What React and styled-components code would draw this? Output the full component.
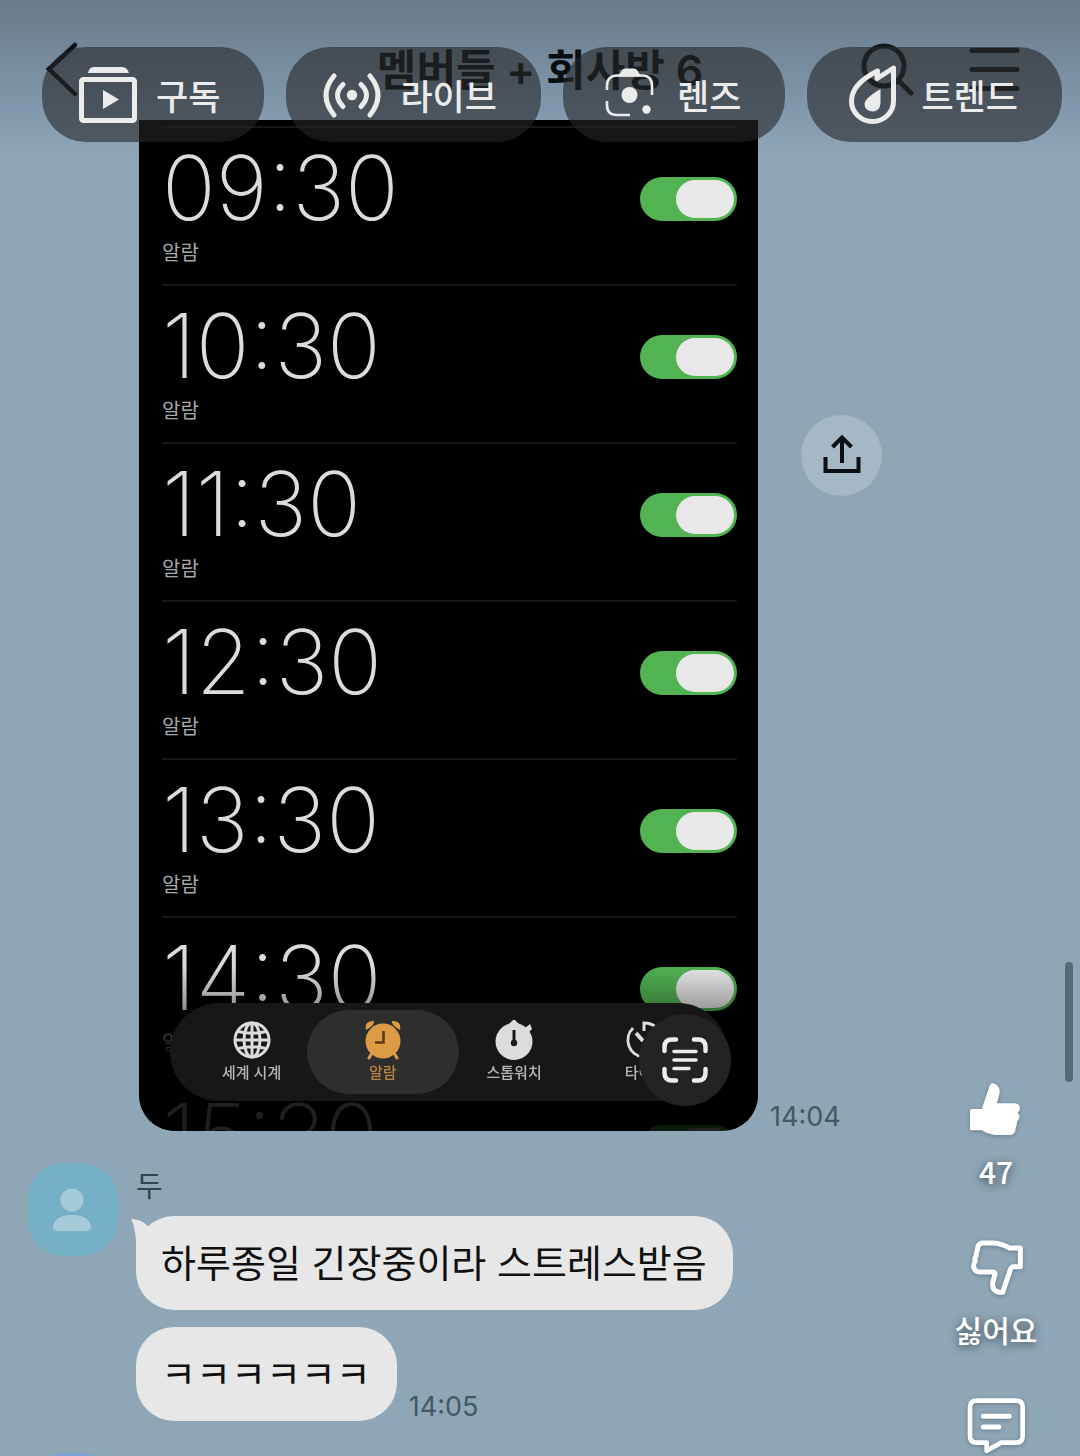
import React, { useState } from 'react';
import styled, { createGlobalStyle } from 'styled-components'

const GlobalStyle = createGlobalStyle`
*{
    box-sizing: border-box;
}
body{
    margin: 0;
    background: #8fa6b6;
    font-family: Inter, "Noto Sans CJK KR", sans-serif;
}
button{
    font: inherit;
    color: inherit;
    padding: 0;
    border: 0;
    background: none;
    cursor: pointer;
}
svg{
    display: block;
}
`

const alarms = ['09:30', '10:30', '11:30', '12:30', '13:30', '14:30', '15:30']

const SubscribeIcon = () => (
    <svg width="58" height="58" viewBox="0 0 58 58" fill="currentColor">
        <path d="M9 7 Q10 1 15 1 H43 Q48 1 50 7 Z" />
        <rect x="2.5" y="13.5" width="53" height="41" rx="2" fill="none" stroke="currentColor" strokeWidth="5" />
        <path d="M24 24 L40 33.5 L24 43 Z" />
    </svg>
)

const LiveIcon = () => (
    <svg width="58" height="58" viewBox="0 0 58 58" fill="none" stroke="currentColor" strokeWidth="5" strokeLinecap="round">
        <circle cx="29" cy="29" r="5.2" fill="currentColor" stroke="none" />
        <path d="M20 18.5 Q9 29 20 40.5 M38 18.5 Q49 29 38 40.5" />
        <path d="M11 10 Q-5 29 11 49 M47 10 Q63 29 47 49" />
    </svg>
)

const LensIcon = () => (
    <svg width="58" height="58" viewBox="0 0 58 58" fill="none" stroke="currentColor" strokeWidth="2.6">
        <path d="M7 24 V20 Q7 9.5 17.5 9.5 H42 Q52 9.5 52 20 V29" />
        <path d="M7 35 V39 Q7 49 17 49 H30" />
        <path d="M18 10.5 L22 4 Q23 2.5 25 2.5 H34 Q36 2.5 37 4 L41 10.5 Z" fill="currentColor" stroke="none" />
        <circle cx="29.5" cy="29" r="8" fill="currentColor" stroke="none" />
        <circle cx="46.5" cy="43.5" r="4.2" fill="currentColor" stroke="none" />
    </svg>
)

const TrendIcon = () => (
    <svg width="58" height="60" viewBox="0 0 58 60" fill="none" stroke="currentColor" strokeWidth="5" strokeLinejoin="round">
        <path d="M49.5 3 L33 13.5 L33.5 6 Q7.5 19 7.5 36 A21 20.5 0 0 0 49.5 36 Z" />
        <path d="M36.5 24 V38 Q36 46.5 28.5 46.5 Q20.5 46 20.5 39 Q21 33 36.5 24 Z" fill="currentColor" stroke="none" />
    </svg>
)

const GlobeIcon = () => (
    <svg width="40" height="40" viewBox="0 0 40 40" fill="none" stroke="currentColor" strokeWidth="3">
        <circle cx="20" cy="20" r="17" />
        <ellipse cx="20" cy="20" rx="8" ry="17" />
        <path d="M20 3 V37 M3 20 H37 M6 11.5 Q20 15 34 11.5 M6 28.5 Q20 25 34 28.5" />
    </svg>
)

const AlarmIcon = () => (
    <svg width="40" height="40" viewBox="0 0 40 40" fill="currentColor">
        <circle cx="20" cy="21" r="17.5" />
        <path d="M3 10 Q1 1 11 1 Q12 5 3 10 M37 10 Q39 1 29 1 Q28 5 37 10" />
        <path d="M9 33 L6 38 M31 33 L34 38" stroke="currentColor" strokeWidth="3" strokeLinecap="round" />
        <path d="M20.5 11 V22.5 H12" fill="none" stroke="#5b3b12" strokeWidth="2.6" />
    </svg>
)

const StopwatchIcon = () => (
    <svg width="40" height="40" viewBox="0 0 40 40" fill="currentColor">
        <circle cx="20" cy="21.5" r="18.5" />
        <path d="M14 5 L20 -1 L26 5 Z M31 8 L36 4 L38 9 L35 12 Z" />
        <path d="M20 10 V22" stroke="#1a1a1a" strokeWidth="3" />
        <circle cx="20" cy="23" r="3.2" fill="#1a1a1a" />
    </svg>
)

const TimerIcon = () => (
    <svg width="40" height="40" viewBox="0 0 40 40" fill="none" stroke="currentColor" strokeWidth="3">
        <path d="M8 8 A17 17 0 0 0 18 37 A17 17 0 0 0 31 8" />
        <path d="M19 11 V3 Q26 3 31 7" />
        <path d="M11 13 L18 21" strokeWidth="4" />
    </svg>
)

const chips = [
    { text: '구독', Icon: SubscribeIcon },
    { text: '라이브', Icon: LiveIcon },
    { text: '렌즈', Icon: LensIcon },
    { text: '트렌드', Icon: TrendIcon }
]

const tabs = [
    { text: '세계 시계', Icon: GlobeIcon },
    { text: '알람', Icon: AlarmIcon },
    { text: '스톱워치', Icon: StopwatchIcon },
    { text: '타이머', Icon: TimerIcon }
]

function ChatHeader() {
    return (
        <Header>
            <button aria-label="뒤로">
                <svg width="34" height="58" viewBox="0 0 34 58" fill="none" stroke="#0c1013" strokeWidth="4.5" strokeLinecap="round">
                    <path d="M30 4 L4 28 L30 53" />
                </svg>
            </button>
            <Title>멤버들 + 회사방 6</Title>
            <HeaderActions>
                <button aria-label="검색">
                    <svg width="56" height="58" viewBox="0 0 56 58" fill="none" stroke="#14181b" strokeWidth="5" strokeLinecap="round">
                        <circle cx="24" cy="25" r="20" />
                        <path d="M38 39 L51 52" />
                    </svg>
                </button>
                <button aria-label="메뉴">
                    <svg width="54" height="58" viewBox="0 0 54 58" fill="none" stroke="#14181b" strokeWidth="5" strokeLinecap="round">
                        <path d="M4 9.5 H49 M4 28.5 H49 M4 47.5 H49" />
                    </svg>
                </button>
            </HeaderActions>
        </Header>
    )
}

function AlarmPhoto() {
    const [off, setOff] = useState([])
    const [tab, setTab] = useState('알람')
    const toggle = (time) => {
        setOff(off.includes(time) ? off.filter(t => t !== time) : [...off, time])
    }

    return (
        <Photo>
            <AlarmList>
                {alarms.map(time => (
                    <AlarmRow key={time}>
                        <div>
                            <Time>{time}</Time>
                            <AlarmLabel htmlFor={`alarm-${time}`}>알람</AlarmLabel>
                        </div>
                        <Switch
                            id={`alarm-${time}`}
                            type="checkbox"
                            checked={!off.includes(time)}
                            onChange={() => toggle(time)}
                        />
                    </AlarmRow>
                ))}
            </AlarmList>
            <Fade />
            <TabBar>
                {tabs.map(({ text, Icon }) => (
                    <Tab key={text} $active={text === tab} onClick={() => setTab(text)}>
                        <Icon />
                        <TabText>{text}</TabText>
                    </Tab>
                ))}
            </TabBar>
            <ScanButton aria-label="텍스트 스캔">
                <svg width="46" height="46" viewBox="0 0 46 46" fill="none" stroke="#ededed" strokeWidth="4.5" strokeLinecap="round">
                    <path d="M2.5 14 V10 Q2.5 2.5 10 2.5 H14 M32 2.5 H36 Q43.5 2.5 43.5 10 V14 M43.5 32 V36 Q43.5 43.5 36 43.5 H32 M14 43.5 H10 Q2.5 43.5 2.5 36 V32" />
                    <path d="M12 14.5 H34 M12 23 H34 M12 31.5 H27" strokeWidth="3.6" />
                </svg>
            </ScanButton>
        </Photo>
    )
}

function ReactionRail() {
    return (
        <Rail>
            <RailButton>
                <svg width="60" height="60" viewBox="0 0 180 180" fill="currentColor">
                    <path d="M17 90 H47 L71 20 Q74 12 82 13 Q103 20 101 42 L93 73 H148 Q162 76 162 88 Q161 98 155 101 Q164 111 158 121 Q153 127 153 130 Q153 140 149 146 Q149 166 133 168 H90 Q68 167 47 154 H17 Q12 154 12 149 V95 Q12 90 17 90 Z" />
                </svg>
                47
            </RailButton>
            <RailButton>
                <svg width="60" height="60" viewBox="0 0 180 180" fill="none" stroke="currentColor" strokeWidth="15" strokeLinejoin="round">
                    <path d="M48 18 H82 Q108 20 130 33 H163 V89 H141 Q136 90 134 95 L110 166 Q78 168 80 138 L87 112 Q87 105 80 105 H40 Q23 102 23 86 Q23 78 28 73 Q24 66 31 55 Q30 46 34 39 Q34 22 48 18 Z" />
                </svg>
                싫어요
            </RailButton>
            <RailButton aria-label="댓글">
                <svg width="60" height="60" viewBox="0 0 180 180" fill="none" stroke="currentColor" strokeWidth="14" strokeLinejoin="round" strokeLinecap="round">
                    <path d="M32 17 H150 Q170 17 170 37 V123 Q170 143 150 143 H106 L62 167 V143 H32 Q12 143 12 123 V37 Q12 17 32 17 Z" />
                    <path d="M52 64 H130 M52 96 H99" strokeWidth="15" />
                </svg>
            </RailButton>
        </Rail>
    )
}

export default function App() {
    return (
        <Screen>
            <GlobalStyle />
            <ChatHeader />
            <PhotoMessage>
                <AlarmPhoto />
                <PhotoSide>
                    <ShareButton aria-label="공유">
                        <svg width="40" height="42" viewBox="0 0 40 42" fill="none" stroke="#0b0f12" strokeWidth="4">
                            <path d="M20 28 V3 M10.5 12 L20 2.5 L29.5 12" />
                            <path d="M3.5 22 V36 H36.5 V22" />
                        </svg>
                    </ShareButton>
                    <Stamp>14:04</Stamp>
                </PhotoSide>
            </PhotoMessage>
            <Message>
                <Avatar $color="#75b0c6">
                    <svg width="40" height="44" viewBox="0 0 40 44" fill="#a5cbd8">
                        <circle cx="19" cy="12" r="11.5" />
                        <path d="M0 38 Q3 27 19 27 Q35 27 38 38 Q39 43 33 43 H5 Q-1 43 0 38 Z" />
                    </svg>
                </Avatar>
                <Bubbles>
                    <Name>두</Name>
                    <Bubble>
                        <Tail width="40" height="40" viewBox="0 0 40 40">
                            <path d="M0 3 Q10 3 17 10 L40 12 V40 H5 Q6 14 0 3 Z" fill="#e7e7e7" />
                        </Tail>
                        <BubbleText>하루종일 긴장중이라 스트레스받음</BubbleText>
                    </Bubble>
                    <BubbleLine>
                        <Bubble>
                            <BubbleText>ㅋㅋㅋㅋㅋㅋ</BubbleText>
                        </Bubble>
                        <Stamp>14:05</Stamp>
                    </BubbleLine>
                </Bubbles>
            </Message>
            <Message>
                <Avatar $color="#7ba3d0" />
            </Message>

            <ChipBar>
                {chips.map(({ text, Icon }) => (
                    <Chip key={text}>
                        <Icon />
                        {text}
                    </Chip>
                ))}
            </ChipBar>
            <ScrollThumb />
            <ReactionRail />
        </Screen>
    )
}

const Screen = styled.main`
position: relative;
height: 100vh;
overflow: hidden;
background: linear-gradient(#697b89 0, #73889a 50px, #8199ae 110px, #8fa6b6 156px);
`

const Header = styled.header`
display: grid;
grid-template-columns: 1fr auto 1fr;
align-items: center;
padding: 41px 45px 21px;
`

const Title = styled.h1`
margin: 0;
font-size: 43px;
line-height: 58px;
font-weight: 600;
color: #0a0d10;
`

const HeaderActions = styled.div`
display: flex;
justify-content: flex-end;
gap: 52px;
padding-right: 13px;
`

const ChipBar = styled.nav`
position: absolute;
top: 47px;
left: 42px;
right: 0;
display: flex;
gap: 22px;
`

const Chip = styled.button`
display: flex;
align-items: center;
gap: 19px;
height: 95px;
padding: 0 44px 0 37px;
border-radius: 44px;
background: rgba(38, 38, 38, .6);
color: #ebebeb;
font-family: "Noto Sans CJK KR", sans-serif;
font-size: 35px;
font-weight: 500;
white-space: nowrap;
`

const PhotoMessage = styled.section`
display: flex;
padding-left: 139px;
`

const Photo = styled.div`
position: relative;
flex: 0 1 619px;
aspect-ratio: 619 / 1011;
min-height: 0;
overflow: hidden;
padding: 6px 21px 0 23px;
border-radius: 0 0 36px 36px;
background: #000;
`

const AlarmList = styled.ul`
height: 100%;
margin: 0;
padding: 0;
list-style: none;
`

const AlarmRow = styled.li`
display: flex;
justify-content: space-between;
align-items: flex-start;
padding: 20px 0 19px;
border-top: 2px solid #171717;
`

const Time = styled.div`
font-size: 89px;
line-height: 80px;
font-weight: 250;
color: #dcdcdc;
`

const AlarmLabel = styled.label`
display: block;
margin-top: 13px;
font-size: 20px;
line-height: 24px;
color: #a8a8a8;
`

const Switch = styled.input`
appearance: none;
flex: none;
width: 97px;
height: 44px;
margin: 29px 0 0;
padding: 3px;
border-radius: 22px;
background: ${({ checked }) => checked ? '#52b352' : '#3a3a3c'};
&::before{
    content: "";
    display: block;
    width: 58px;
    height: 38px;
    margin-left: ${({ checked }) => checked ? 'auto' : '0'};
    border-radius: 19px;
    background: #e8e8e8;
}
`

const Fade = styled.div`
position: absolute;
left: 0;
right: 0;
bottom: 0;
height: 166px;
background: linear-gradient(transparent, rgba(0, 0, 0, .3) 40px, rgba(0, 0, 0, .86) 90px);
pointer-events: none;
`

const TabBar = styled.nav`
position: absolute;
left: 31px;
right: 31px;
bottom: 30px;
display: flex;
padding: 7px 16px;
border-radius: 49px;
background: #171717;
`

const Tab = styled.button`
flex: 1 1 0;
display: flex;
flex-direction: column;
align-items: center;
gap: 2px;
height: 84px;
margin: 0 -10px;
padding-top: 10px;
border-radius: 42px;
background: ${({ $active }) => $active ? '#2e2e2e' : 'transparent'};
color: ${({ $active }) => $active ? '#dd9b45' : '#dcdcdc'};
`

const TabText = styled.span`
font-size: 15px;
line-height: 22px;
font-weight: 500;
white-space: nowrap;
opacity: .8;
`

const ScanButton = styled.button`
position: absolute;
right: 27px;
bottom: 25px;
display: grid;
place-items: center;
width: 92px;
height: 92px;
border-radius: 50%;
background: #232323;
`

const PhotoSide = styled.div`
display: flex;
flex-direction: column;
justify-content: space-between;
padding: 295px 0 0 12px;
`

const ShareButton = styled.button`
display: grid;
place-items: center;
width: 81px;
height: 81px;
margin-left: 31px;
border-radius: 50%;
background: #a4b8c6;
`

const Stamp = styled.time`
font-size: 27px;
line-height: 28px;
color: #455866;
`

const Message = styled.section`
display: flex;
gap: 18px;
padding: 32px 28px 0;
`

const Avatar = styled.div`
flex: none;
display: grid;
place-items: center;
width: 90px;
height: 93px;
border-radius: 36px;
background: ${({ $color }) => $color};
`

const Bubbles = styled.div`
display: flex;
flex-direction: column;
align-items: flex-start;
gap: 17px;
`

const Name = styled.div`
margin-bottom: -8px;
padding-top: 4px;
font-size: 29px;
line-height: 40px;
color: #33444f;
`

const Bubble = styled.p`
position: relative;
margin: 0;
padding: 18px 26px 18px 25px;
border-radius: 38px;
background: #e7e7e7;
color: #101010;
`

const BubbleText = styled.span`
position: relative;
display: block;
font-size: 38px;
line-height: 58px;
`

const Tail = styled.svg`
position: absolute;
left: -5px;
top: 0;
`

const BubbleLine = styled.div`
display: flex;
align-items: flex-end;
gap: 12px;
`

const ScrollThumb = styled.div`
position: absolute;
right: 7px;
top: 962px;
width: 8px;
height: 120px;
border-radius: 4px;
background: #566977;
`

const Rail = styled.aside`
position: absolute;
right: 34px;
bottom: 1px;
display: flex;
flex-direction: column;
align-items: center;
gap: 46px;
width: 100px;
`

const RailButton = styled.button`
display: flex;
flex-direction: column;
align-items: center;
gap: 12px;
color: #fff;
font-family: "Noto Sans CJK KR", sans-serif;
font-size: 30px;
line-height: 40px;
font-weight: 500;
text-shadow: 0 2px 8px rgba(20, 30, 40, .7);
svg{
    filter: drop-shadow(0 1px 2px rgba(30, 40, 50, .35));
}
`
